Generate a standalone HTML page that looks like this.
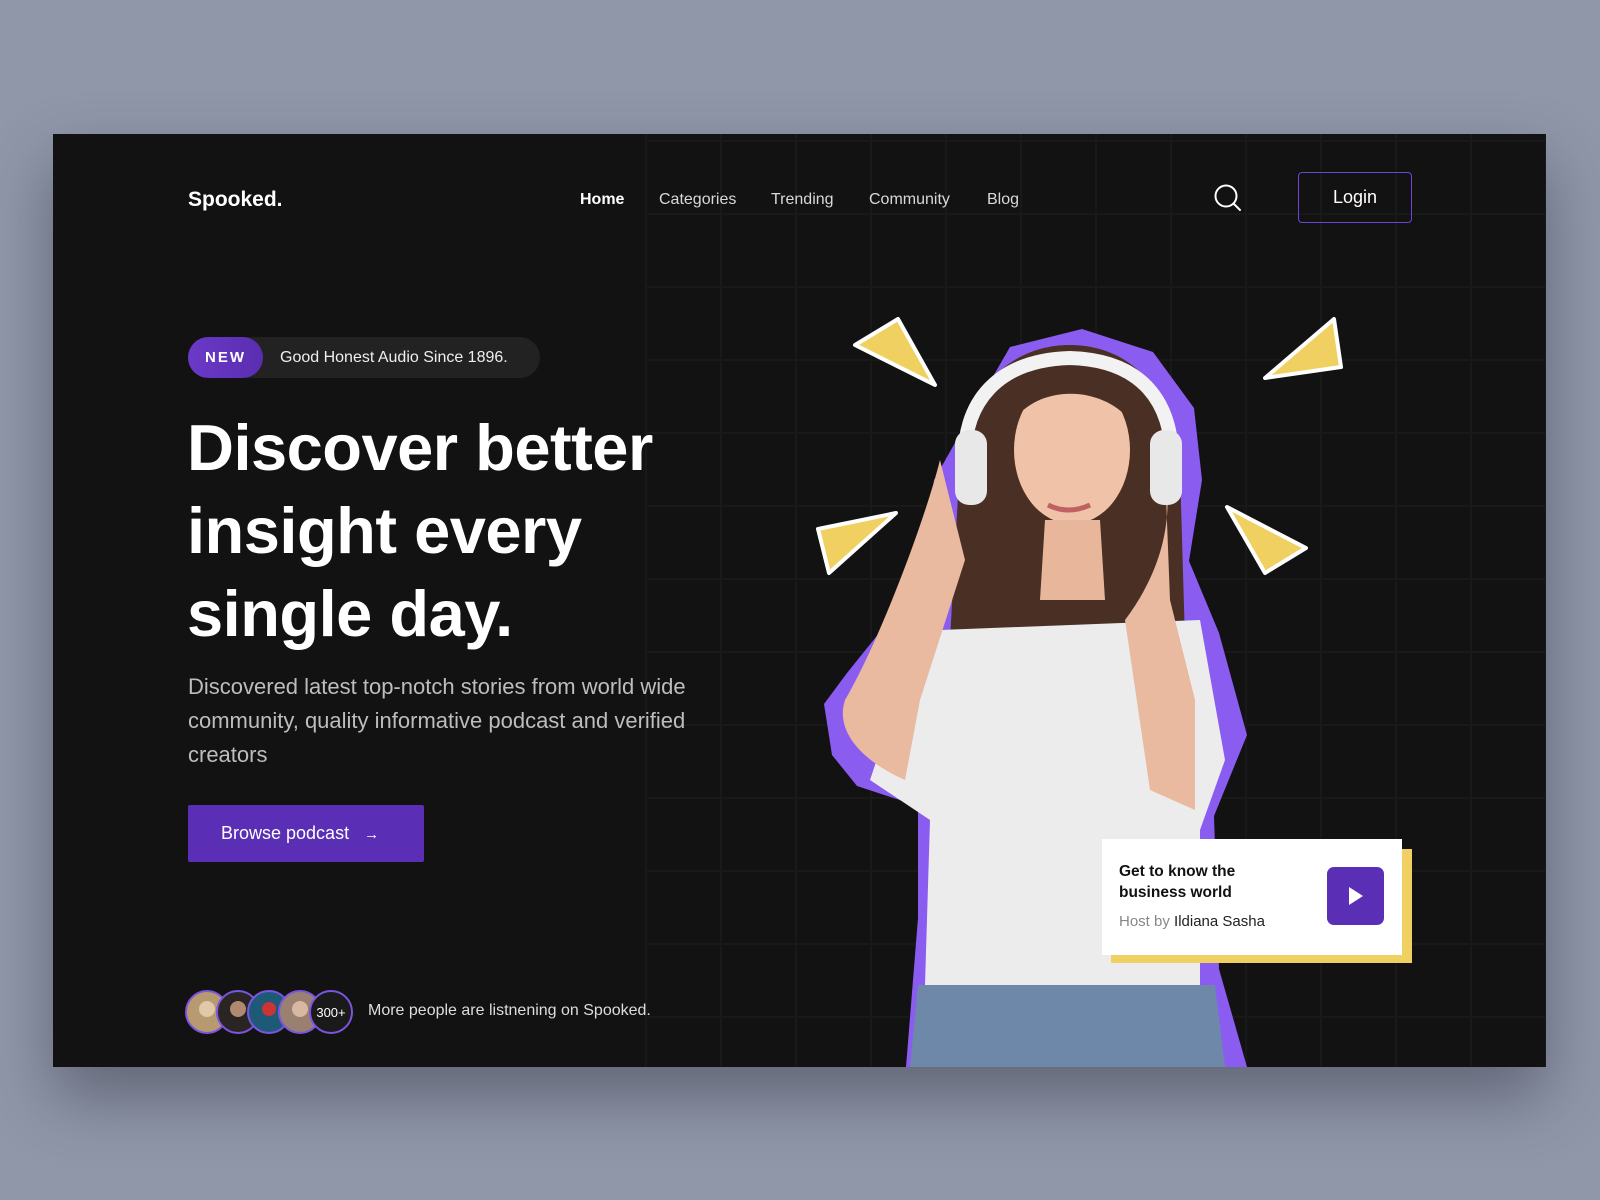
<!DOCTYPE html>
<html><head><meta charset="utf-8"><style>
*{margin:0;padding:0;box-sizing:border-box}
body{width:1600px;height:1200px;background:#9097a8;font-family:"Liberation Sans",sans-serif;position:relative;overflow:hidden}
.frame{position:absolute;left:53px;top:134px;width:1493px;height:933px;background:#121212;overflow:hidden;box-shadow:0 30px 60px rgba(40,45,60,.45)}
.grid{position:absolute;left:592px;top:0;right:0;bottom:0;background-image:linear-gradient(#191919 2px,transparent 2px),linear-gradient(90deg,#191919 2px,transparent 2px);background-size:75px 73px;background-position:0 6px}
.a{position:absolute;white-space:nowrap}
.nav{top:57px;font-size:16px;color:#d8d8d8}
</style></head><body>
<div class="frame">
<div class="grid"></div>
<div class="a" style="left:135px;top:54px;font-size:21px;font-weight:bold;color:#fff">Spooked.</div>
<div class="a nav" style="left:527px;color:#fff;font-weight:bold">Home</div>
<div class="a nav" style="left:606px">Categories</div>
<div class="a nav" style="left:718px">Trending</div>
<div class="a nav" style="left:816px">Community</div>
<div class="a nav" style="left:934px">Blog</div>
<svg class="a" style="left:1160px;top:49px" width="30" height="30" viewBox="0 0 30 30"><circle cx="13" cy="13" r="10.5" fill="none" stroke="#fff" stroke-width="2"/><path d="M21 21l6 6" stroke="#fff" stroke-width="2" stroke-linecap="round"/></svg>
<div class="a" style="left:1245px;top:38px;width:114px;height:51px;border:1.5px solid #6b45d8;border-radius:4px;color:#fff;font-size:18px;text-align:center;line-height:48px">Login</div>
<div class="a" style="left:135px;top:203px;width:352px;height:41px;border-radius:21px;background:#222"></div>
<div class="a" style="left:135px;top:203px;width:75px;height:41px;border-radius:21px;background:linear-gradient(90deg,#6a3ac8,#5a2db0);color:#fff;font-weight:bold;font-size:15px;letter-spacing:2px;text-align:center;line-height:41px">NEW</div>
<div class="a" style="left:227px;top:203px;line-height:41px;color:#eee;font-size:16px">Good Honest Audio Since 1896.</div>
<div class="a" style="left:134px;top:272px;font-size:65px;font-weight:bold;color:#fff;line-height:83px;letter-spacing:-.5px">Discover better<br>insight every<br>single day.</div>
<div class="a" style="left:135px;top:536px;font-size:22px;color:#bdbdbd;line-height:34px">Discovered latest top-notch stories from world wide<br>community, quality informative podcast and verified<br>creators</div>
<div class="a" style="left:135px;top:671px;width:236px;height:57px;background:#5a2fb5;border-radius:2px;color:#fff;font-size:18px;line-height:57px;padding-left:33px">Browse podcast &nbsp;&nbsp;<span style="font-size:15px">→</span></div>
<svg class="a" style="left:130px;top:853px" width="230" height="50">
<g stroke="#7b55e0" stroke-width="2">
<circle cx="24" cy="25" r="21" fill="#b89a70"/><circle cx="55" cy="25" r="21" fill="#2a2522"/><circle cx="86" cy="25" r="21" fill="#1e5a78"/><circle cx="117" cy="25" r="21" fill="#9a8070"/><circle cx="148" cy="25" r="21" fill="#1a1a1a"/></g>
<circle cx="86" cy="22" r="7" fill="#c33"/><circle cx="117" cy="22" r="8" fill="#d8b8a0"/><circle cx="55" cy="22" r="8" fill="#b08a70"/><circle cx="24" cy="22" r="8" fill="#e0c8a8"/>
<text x="148" y="30" fill="#fff" font-size="13" text-anchor="middle" font-family="Liberation Sans">300+</text></svg>
<div class="a" style="left:315px;top:868px;font-size:16px;color:#ddd">More people are listnening on Spooked.</div>
</div>
<svg class="a" style="left:0;top:0" width="1600" height="1067" viewBox="0 0 1600 1067">
<path d="M1082 329L1010 347L969 418L934 480L923 556L888 622L847 673L824 704L832 755L857 786L918 806L918 918L906 1067L1247 1067L1219 969L1214 816L1247 735L1219 633L1189 561L1202 480L1194 408L1153 352Z" fill="#8b5cf0"/>
<path d="M1070 345C1010 345 965 390 960 460L950 640L1185 640L1180 470C1175 390 1130 345 1070 345Z" fill="#4a3024"/>
<path d="M940 630L1200 620L1225 760L1200 830L1200 985L925 985L930 820L870 780L900 690Z" fill="#ececec"/>
<path d="M918 985L1215 985L1225 1067L910 1067Z" fill="#6d88a8"/>
<path d="M940 460C925 520 880 640 845 700C835 730 860 760 905 780L920 700L965 560Z" fill="#e9b9a0"/>
<path d="M1165 470C1175 530 1155 580 1125 620L1150 790L1195 810L1195 700L1170 600Z" fill="#e9b9a0"/>
<ellipse cx="1072" cy="450" rx="58" ry="74" fill="#f0c2a8"/>
<path d="M1045 520L1100 520L1105 600L1040 600Z" fill="#e8b69a"/>
<path d="M1014 420C1040 385 1100 385 1130 420L1125 380C1090 355 1040 360 1010 390Z" fill="#4a3024"/>
<path d="M965 470C960 400 1000 360 1070 358C1140 360 1175 400 1172 470" fill="none" stroke="#f2f2f2" stroke-width="14"/>
<rect x="955" y="430" width="32" height="75" rx="14" fill="#e8e8e8"/>
<rect x="1150" y="430" width="32" height="75" rx="14" fill="#e8e8e8"/>
<path d="M1048 505Q1068 515 1090 505" stroke="#c06060" stroke-width="5" fill="none"/>
<g stroke="#fff" stroke-width="4" stroke-linejoin="round">
<path d="M855 345L898 319L935 385Z" fill="#f0d060"/>
<path d="M1265 378L1334 319L1341 367Z" fill="#f0d060"/>
<path d="M818 529L896 513L829 573Z" fill="#f0d060"/>
<path d="M1227 507L1306 548L1265 573Z" fill="#f0d060"/></g>
<rect x="1111" y="849" width="301" height="114" fill="#f0d060"/>
<rect x="1102" y="839" width="300" height="116" fill="#fff"/>
<rect x="1327" y="867" width="57" height="58" rx="7" fill="#5a2fb5"/>
<path d="M1349 887L1363 896L1349 905Z" fill="#fff"/>
<text font-family="Liberation Sans" font-size="15.5" font-weight="bold" fill="#111"><tspan x="1119" y="876">Get to know the</tspan><tspan x="1119" y="897">business world</tspan></text>
<text x="1119" y="926" font-family="Liberation Sans" font-size="15" fill="#888">Host by <tspan fill="#222">Ildiana Sasha</tspan></text>
</svg>
</body></html>
